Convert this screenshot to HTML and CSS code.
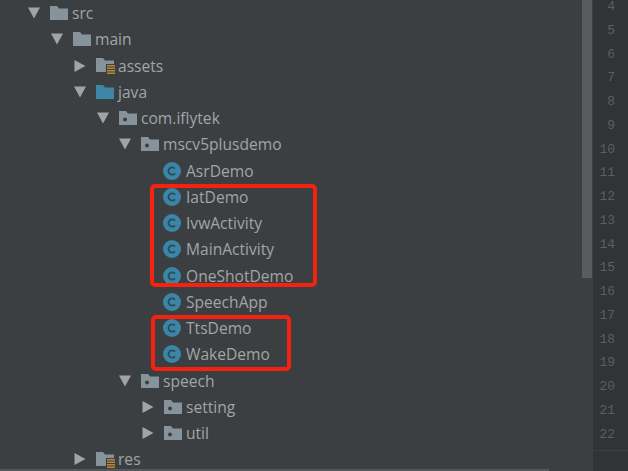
FILE: index.html
```html
<!DOCTYPE html>
<html lang="en">
<head>
<meta charset="utf-8">
<title>Project tree</title>
<link rel="stylesheet" href="styles.css">
</head>
<body>
<svg class="defs" width="0" height="0" aria-hidden="true">
  <symbol id="down" viewBox="0 0 12 11"><path d="M0 0H12L6 11Z"/></symbol>
  <symbol id="right" viewBox="0 0 11 12"><path d="M0 0V12L11 6Z"/></symbol>
  <symbol id="folder" viewBox="0 0 18 14"><path d="M0 0H7L9 2.500H18V14H0Z"/></symbol>
  <symbol id="pkg" viewBox="0 0 18 14"><path fill-rule="evenodd" d="M0 0H7L9 2.500H18V14H0ZM6 6.500A2 2 0 1 0 6 10.500A2 2 0 1 0 6 6.500Z"/></symbol>
  <symbol id="res" viewBox="0 0 20 17"><path fill="#87939a" d="M0 0H7L9 2.500H18V14H0Z"/><path fill="#3c3f41" d="M10 6H20V17H10Z"/><path fill="#b98a35" d="M11 7H19V8.500H11ZM11 9.500H19V11H11ZM11 12H19V13.500H11ZM11 14.500H19V16H11Z"/></symbol>
  <symbol id="cls" viewBox="0 0 18 18"><circle cx="9" cy="9" r="9" fill="#3b86a6"/><path d="M12 6.600A3.700 3.700 0 1 0 12 11.400" fill="none" stroke="#2d4a58" stroke-width="1.800"/></symbol>
</svg>
<main class="ide">
  <section class="tree">
    <div class="row d0"><svg class="arrow"><use href="#down"/></svg><svg class="icon grey"><use href="#folder"/></svg><span>src</span></div>
    <div class="row d1"><svg class="arrow"><use href="#down"/></svg><svg class="icon grey"><use href="#folder"/></svg><span>main</span></div>
    <div class="row d2"><svg class="arrow"><use href="#right"/></svg><svg class="icon wide"><use href="#res"/></svg><span>assets</span></div>
    <div class="row d2"><svg class="arrow"><use href="#down"/></svg><svg class="icon blue"><use href="#folder"/></svg><span>java</span></div>
    <div class="row d3"><svg class="arrow"><use href="#down"/></svg><svg class="icon grey"><use href="#pkg"/></svg><span>com.iflytek</span></div>
    <div class="row d4"><svg class="arrow"><use href="#down"/></svg><svg class="icon grey"><use href="#pkg"/></svg><span>mscv5plusdemo</span></div>
    <div class="row leaf"><svg class="cicon"><use href="#cls"/></svg><span>AsrDemo</span></div>
    <div class="row leaf"><svg class="cicon"><use href="#cls"/></svg><span>IatDemo</span></div>
    <div class="row leaf"><svg class="cicon"><use href="#cls"/></svg><span>IvwActivity</span></div>
    <div class="row leaf"><svg class="cicon"><use href="#cls"/></svg><span>MainActivity</span></div>
    <div class="row leaf"><svg class="cicon"><use href="#cls"/></svg><span>OneShotDemo</span></div>
    <div class="row leaf"><svg class="cicon"><use href="#cls"/></svg><span>SpeechApp</span></div>
    <div class="row leaf"><svg class="cicon"><use href="#cls"/></svg><span>TtsDemo</span></div>
    <div class="row leaf"><svg class="cicon"><use href="#cls"/></svg><span>WakeDemo</span></div>
    <div class="row d4"><svg class="arrow"><use href="#down"/></svg><svg class="icon grey"><use href="#pkg"/></svg><span>speech</span></div>
    <div class="row d5"><svg class="arrow"><use href="#right"/></svg><svg class="icon grey"><use href="#pkg"/></svg><span>setting</span></div>
    <div class="row d5"><svg class="arrow"><use href="#right"/></svg><svg class="icon grey"><use href="#pkg"/></svg><span>util</span></div>
    <div class="row d2"><svg class="arrow"><use href="#right"/></svg><svg class="icon wide"><use href="#res"/></svg><span>res</span></div>
    <div class="mark mark-a"></div>
    <div class="mark mark-b"></div>
    <div class="hbar"></div>
  </section>
  <aside class="scroll"><div class="thumb"></div></aside>
  <section class="gutter">
    <div>4</div><div>5</div><div>6</div><div>7</div><div>8</div><div>9</div><div>10</div><div>11</div><div>12</div><div>13</div><div>14</div><div>15</div><div>16</div><div>17</div><div>18</div><div>19</div><div>20</div><div>21</div><div>22</div>
    <div class="end"></div>
  </section>
</main>
</body>
</html>
```

FILE: styles.css
```css
html, body { margin: 0; height: 100%; overflow: hidden; background: #3c3f41; }
.defs { position: absolute; }
.ide { display: flex; height: 471px; width: 628px; }
.tree { position: relative; flex: 0 0 582px; box-sizing: border-box; overflow: hidden; }
.row {
  display: flex; align-items: center; height: 26.25px;
  font: 15.6px/26px "Open Sans", sans-serif; color: #a0a5a8; white-space: nowrap;
}
.row span { display: block; }
.d0 { padding-left: 28px; }
.d1 { padding-left: 51px; }
.d2 { padding-left: 74px; }
.d3 { padding-left: 97px; }
.d4 { padding-left: 119px; }
.d5 { padding-left: 142px; }
.leaf { padding-left: 163px; }
.arrow { width: 12px; height: 12px; flex: none; margin-right: 10px; fill: #a0a4a6; }
.icon { width: 18px; height: 14px; flex: none; margin-right: 4px; }
.wide { width: 20px; height: 17px; margin-right: 2px; margin-top: 2px; }
.grey { fill: #87939a; }
.blue { fill: #3e86a5; }
.cicon { width: 18px; height: 18px; flex: none; margin-right: 5px; }
.mark { position: absolute; border: 4px solid #f5220f; border-radius: 5px; box-sizing: border-box; }
.mark-a { left: 150px; top: 184px; width: 167px; height: 103px; }
.mark-b { left: 151px; top: 315px; width: 140px; height: 56px; }
.hbar { position: absolute; left: 0; bottom: 0; width: 549px; height: 2px; background: #55585a; }
.scroll { flex: 0 0 11px; background: #3c3f41; }
.thumb { width: 10px; height: 278px; background: #595b5d; }
.gutter { flex: 1; background: #313335; color: #5c5f60; font: 13px/23.75px "Liberation Mono", monospace; text-align: right; padding-right: 13px; }
.gutter div { height: 23.75px; position: relative; top: -5px; }
.gutter .end { height: 0; border-top: 1px solid #3c3f41; margin-right: -13px; margin-top: 4px; }
```
